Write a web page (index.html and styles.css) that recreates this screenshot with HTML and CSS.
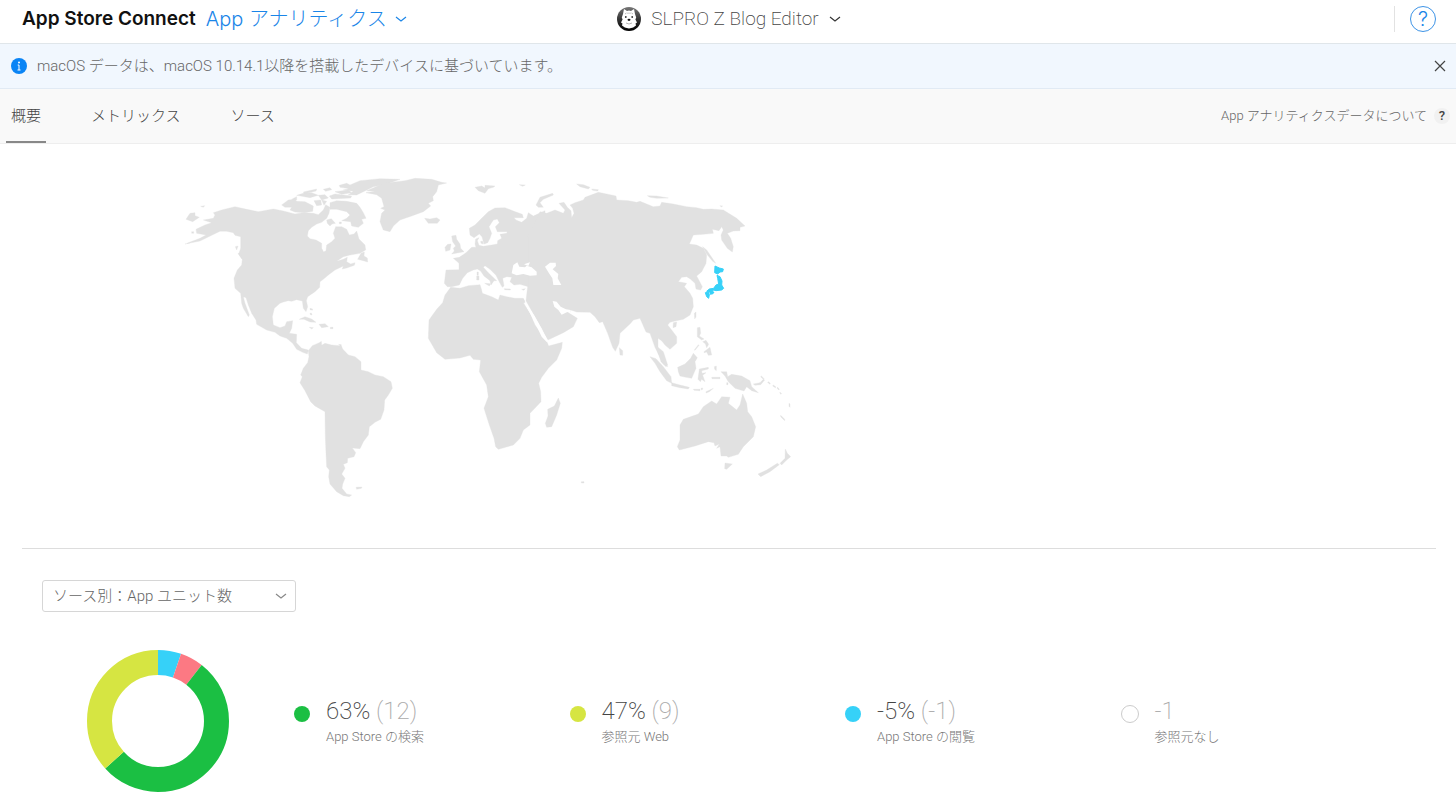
FILE: index.html
```html
<!DOCTYPE html>
<html lang="ja">
<head>
<meta charset="utf-8">
<meta name="viewport" content="width=device-width, initial-scale=1">
<title>App アナリティクス</title>
<link rel="stylesheet" href="styles.css">
</head>
<body>
<header class="topbar">
  <div class="brand">
    <a class="brand-name" href="#">App Store Connect</a>
    <button class="section-menu" type="button">App アナリティクス
      <svg class="chevron" viewBox="0 0 12 12" width="12" height="12" aria-hidden="true"><path d="M1 4l5 4 5-4"/></svg>
    </button>
  </div>
  <button class="app-menu" type="button">
    <svg class="app-icon" viewBox="0 0 24 24" width="24" height="24" aria-hidden="true">
      <defs><linearGradient id="dark" x1="0" y1="0" x2="0" y2="1"><stop offset="0" stop-color="#777"/><stop offset=".6" stop-color="#2a2a2a"/><stop offset="1" stop-color="#000"/></linearGradient></defs>
      <circle cx="12" cy="12" r="12" fill="url(#dark)"/>
      <path fill="#fff" d="M7 2l3 2q2-.8 4 0L17 2l1 5 1.200 3.500-.8 2 1.600 3-1.500 1 .5 2-2.800 2L12 21.500l-4.200-1-2.800-2 .5-2-1.500-1 1.600-3-.8-2L6 7z"/>
      <circle cx="8.800" cy="10" r=".9" fill="#333"/><circle cx="15.200" cy="10" r=".9" fill="#333"/>
      <ellipse cx="12" cy="12.800" rx="1.500" ry="1.100" fill="#111"/>
      <path d="M9 16q3 2 6 0M8 7l1.500-1M16 7l-1.500-1M11 5.500v1.500M13 5.500v1.500" fill="none" stroke="#888" stroke-width=".6"/>
    </svg>
    <span>SLPRO Z Blog Editor</span>
    <svg class="chevron" viewBox="0 0 12 12" width="12" height="12" aria-hidden="true"><path d="M1 4l5 4 5-4"/></svg>
  </button>
  <div class="top-actions">
    <button class="help" type="button" aria-label="ヘルプ">?</button>
  </div>
</header>

<div class="notice" role="status">
  <svg class="info" viewBox="0 0 16 16" width="16" height="16" aria-hidden="true"><circle cx="8" cy="8" r="8" fill="#0a84f5"/><circle cx="8" cy="4.500" r="1" fill="#fff"/><path d="M6.700 7H8v5M6.500 12h3" fill="none" stroke="#fff"/></svg>
  <p class="notice-text">macOS データは、macOS 10.14.1以降を搭載したデバイスに基づいています。</p>
  <button class="close" type="button" aria-label="閉じる"><svg viewBox="0 0 12 12" width="12" height="12" aria-hidden="true"><path d="M1 1l10 10M11 1L1 11"/></svg></button>
</div>

<nav class="tabs">
  <a class="tab tab-active" href="#">概要</a>
  <a class="tab" href="#">メトリックス</a>
  <a class="tab" href="#">ソース</a>
  <a class="about" href="#">App アナリティクスデータについて <span class="about-mark">?</span></a>
</nav>

<main class="content">
  <section class="map-panel">
    <svg class="map" viewBox="0 0 1860 1005" role="img" aria-label="世界地図">
      <g class="land">
        <!-- North America -->
        <path d="M100 128L125 120 165 110 200 118 235 125 280 117 310 123 330 128 345 132 370 128 400 130 415 134 430 120 437 104 450 112 447 130 440 145 425 157 410 162 395 172 385 182 382 198 390 206 408 210 425 220 425 235 431 246 438 242 440 225 455 215 465 205 460 190 467 170 485 170 500 178 508 195 522 192 530 183 537 207 555 225 557 240 540 250 510 255 490 260 470 274 490 268 502 262 500 275 512 282 525 278 523 286 500 294 487 297 490 288 465 300 445 315 430 328 420 335 419 352 405 365 383 380 379 392 383 410 378 425 370 415 367 393 350 389 335 394 325 392 310 396 300 400 283 415 277 440 280 465 300 473 315 468 320 455 338 452 335 475 328 490 350 493 349 518 365 535 385 540 382 552 368 547 350 538 338 520 320 505 300 498 285 487 260 480 230 463 228 450 215 430 205 405 198 383 190 380 195 400 208 435 205 440 190 415 185 400 182 370 165 355 162 325 172 300 185 285 187 268 176 252 182 235 182 200 165 196 160 188 140 184 120 184 95 196 60 213 15 222 60 205 78 195 50 190 48 178 75 165 95 158 70 150 100 145 105 135z"/>
        <path d="M18 148L30 130 45 128 45 137 58 142 38 155zM62 109L74 107 70 112zM35 185h6v5h-6zM166 230l8-2-4 12zM174 250l10 4 14 14-1 6-12-8z"/>
        <path d="M305 105L325 90 345 88 350 94 375 95 400 108 398 124 375 128 345 126 330 120 335 112 315 112zM335 88L350 80 350 90zM350 76L370 70 395 68 415 76 390 83zM370 66l40-9-2 6-35 8zM415 76l20-2 10 10-20 6zM402 92l20-2 3 15-15 2zM425 90l15 4-8 12zM430 58l20-5 5 6-18 5zM448 78L465 72 515 78 512 84 455 87zM478 46L500 40 520 50 515 60 500 55 480 52zM465 65l40-5 10 8-30 5z"/>
        <path d="M510 45L540 32 600 26 660 28 620 42 580 50 550 65 530 75 505 74 520 64 490 60 520 54z"/>
        <path d="M450 98L470 92 500 94 530 100 540 112 550 128 558 145 545 148 550 160 535 172 515 168 512 155 485 152 500 145 510 135 500 125 470 118 450 118zM440 150l14-4 12 14-10 2-6 6-8-8zM478 156h6v5h-6z"/>
        <path d="M533 268L543 250 553 246 552 258 562 264 563 276 550 272zM358 448L375 440 395 447 408 457 390 456 372 448zM417 463l18-2 10 9-20 3zM388 472l12 1-5 4zM451 472h8v4h-8zM390 415l8 2-1 4-7-2zM390 430l4-1 2 6-5-1z"/>
      </g>
      <g class="land" transform="translate(300 480)">
        <!-- South America -->
        <path d="M85 62L97 47 118 38 124 34 125 46 135 40 155 45 178 47 183 45 188 57 205 75 225 80 243 95 243 120 265 125 285 135 310 140 333 155 337 175 325 195 314 210 312 240 302 268 285 277 268 290 265 315 250 335 240 356 217 354 227 368 222 380 203 385 202 398 190 403 195 415 185 432 195 445 188 462 186 475 200 492 215 495 208 500 190 497 170 485 150 462 146 440 148 420 140 410 138 370 136 320 135 245 105 228 92 215 75 182 60 158 67 140 62 135 70 115 83 98 87 80z"/>
        <path d="M228 472l18-1-2 4-14 3zM176 43l8 1-2 5z"/>
      </g>
      <g class="land" transform="translate(540 0)">
        <!-- Greenland and Iceland -->
        <path d="M18 68L45 64 20 62 60 45 85 38 135 32 165 25 215 28 245 37 260 39 235 45 230 65 218 80 220 92 205 100 212 108 190 125 155 138 120 150 100 168 90 185 70 180 60 155 65 130 75 120 62 115 72 110 65 85 50 74z"/>
        <path d="M194 145L210 147 230 143 240 150 232 160 205 160z"/>
        <path d="M345 52L365 48 375 54 375 46 405 48 400 52 385 56 375 70 355 62zM478 44l18 1-8 4zM528 105L540 82 578 70 580 75 550 88 540 98 550 112 535 112z"/>
        <!-- Europe -->
        <path d="M555 122L520 138 505 128 500 145 485 157 468 150 462 143 490 143 487 133 460 123 435 113 405 114 385 125 365 145 345 165 328 175 330 195 342 203 358 192 366 200 372 222 383 218 390 205 395 190 387 170 400 150 412 147 418 158 406 170 412 185 442 185 440 190 420 193 425 205 413 212 412 222 395 225 370 229 357 226 352 212 357 203 347 207 345 222 348 232 335 232 318 248 298 262 280 265 297 280 297 299 258 300 253 340 262 350 275 350 298 345 308 325 322 308 340 300 352 297 362 303 372 318 390 332 393 345 402 332 410 332 385 308 370 292 375 287 390 298 408 316 420 340 427 352 432 348 428 325 440 320 455 322 450 335 462 345 480 343 505 350 560 355z"/>
        <path d="M275 198L288 196 290 208 300 222 302 235 312 245 275 252 283 243 280 235 287 228 278 215zM255 232L263 223 273 222 270 240 257 244zM374 340l18 1-4 7zM350 318h7v12h-7zM351 306h4v10h-4zM362 214l6 0 2 8-7-2zM433 356l18 1v3l-17-1zM485 358l11-2-5 5z"/>
      </g>
      <g class="land" transform="translate(1080 0)">
        <!-- Asia -->
        <path d="M0 125L20 130 45 120 70 130 75 120 57 100 72 97 82 112 93 122 95 143 102 130 98 115 90 105 105 98 130 90 135 82 175 67 200 72 228 78 230 90 265 92 290 97 300 94 340 110 360 108 365 97 400 102 440 110 470 113 490 118 515 117 550 120 590 145 615 168 600 172 600 182 580 183 562 190 572 205 580 230 577 246 562 235 545 210 543 195 550 180 545 170 537 182 517 178 520 190 490 193 460 195 448 222 470 225 490 235 500 255 498 280 485 305 470 318 487 350 482 360 468 357 465 340 452 328 440 320 425 322 415 335 440 340 433 350 450 370 458 385 460 410 450 435 430 448 405 453 390 457 383 465 395 480 410 500 410 520 390 538 375 525 365 512 354 505 354 545 365 555 383 590 370 582 345 532 330 490 318 486 300 445 280 450 272 460 240 490 237 520 226 544 218 532 203 490 188 455 178 458 165 440 150 427 110 426 92 420 88 430 112 445 100 470 70 488 22 511 5 475 -15 440 -42 392 -37 350 -37 200z"/>
        <path d="M110 42L130 44 150 52 145 57 120 50zM155 57l20 2-2 4-15-2zM322 77L350 78 385 84 350 85 330 82zM540 107l8 1-4 3zM488 230L500 240 515 262 527 280 518 274 500 252zM400 458l10-2-2 14-9 3zM463 430l5-4 0 15-4 6z"/>
        <g class="japan">
          <path d="M525 288L538 294 550 297 548 305 540 306 533 312 524 308zM531 316L540 320 546 333 545 345 551 355 545 360 528 362 520 360 515 368 500 364 508 357 521 355 528 345 536 342 533 325zM496 368L506 366 508 375 506 385 500 380zM512 366l10 0-3 5-8 2z"/>
        </g>
      </g>
      <g class="land" transform="translate(720 330)">
        <!-- Africa -->
        <path d="M92 22L120 25 145 17 180 14 185 30 187 40 215 50 235 60 240 45 260 50 285 55 310 55 318 70 310 68 330 100 345 135 362 158 380 184 386 198 427 187 425 205 410 240 385 265 365 292 356 310 362 335 363 365 330 400 330 435 310 450 300 475 280 495 235 508 227 500 222 475 208 435 192 385 205 350 200 315 178 275 182 240 160 238 150 226 120 234 75 238 50 218 25 175 27 120 50 88 68 68 75 45z"/>
        <path d="M415 354L421 370 410 405 395 440 380 442 376 430 384 408 383 388 403 378z"/>
      </g>
      <g class="land" transform="translate(1260 360)">
        <!-- Islands and Oceania -->
        <path d="M58 173L68 182 68 196 60 195zM150 200L168 206 190 230 213 260 215 280 200 272 180 245 165 220zM215 278L240 285 268 292 265 297 240 293 215 287zM172 170L190 185 203 225 198 230 183 215 175 190zM233 232L255 222 272 205 280 190 292 203 285 215 288 235 275 265 258 262 240 258 235 245zM298 237L325 232 325 237 305 242 306 250 318 248 308 256 315 275 305 268 301 275 294 268zM280 298l20 0 0 4-18-1zM318 305l22-10-12 10-10 4zM335 262l25 0 0 4-24 0zM343 230l6-2 0 14-5-4zM292 113L300 112 302 130 298 138 312 147 305 150 292 140zM283 180l12-16 2 2-12 15zM308 155l10-4 8 12-6 10-4-12zM312 185L330 172 335 195 325 196 320 186 312 188zM303 295l5-1 0 4-4 2z"/>
        <path d="M363 245L380 245 383 260 395 253 425 258 450 272 455 290 475 308 455 302 440 290 432 303 405 295 385 275 375 258zM380 278h4v6h-4zM460 282L480 278 490 268 494 270 482 284 465 286zM484 258l8 8-2 2-8-8zM505 275l6 5-2 3-6-6zM520 285l8 6-2 2-8-5zM533 292l5 6-2 2-5-6zM540 307l5 4-2 2-4-4zM567 340l3 2 0 10-3-3zM542 376l12 12 0 4-12-12z"/>
        <path d="M428 312L440 340 443 365 455 380 467 410 460 440 430 470 415 493 385 502 380 498 363 498 360 470 350 475 358 462 345 468 342 458 325 455 285 468 238 480 232 470 240 450 240 405 250 388 295 372 310 350 335 333 350 342 365 320 390 322 385 340 410 360 420 345zM375 519L397 522 380 538 374 536zM474 552L500 540 532 520 538 524 510 545 482 560zM556 477L562 490 572 500 560 510 545 525 540 520 555 505z"/>
      </g>
      <g class="land"><path d="M1204 935l8 0 0 4-8 0z"/></g>
      <!-- Inland seas -->
      <g class="sea" transform="translate(1080 0)">
        <path d="M-85 310L-80 285 -68 277 -62 290 -45 292 -40 287 -25 292 -10 305 -10 316 -30 317 -50 312 -70 316zM-48 283L-30 277 -35 288zM15 290L30 278 47 278 48 288 38 298 55 312 53 325 64 345 40 345 37 325 27 310zM38 393L50 395 62 410 78 418 92 420 90 430 82 426 65 434 55 420 43 410z"/>
        <path d="M-45 392L-40 402 -15 440 15 495 25 512 20 516 5 500 -15 458 -46 400z"/>
      </g>
    </svg>
  </section>

  <section class="sources">
    <div class="select-box">
      <select class="select" aria-label="表示する指標"><option>ソース別：App ユニット数</option></select>
      <svg class="chevron select-arrow" viewBox="0 0 12 12" width="12" height="12" aria-hidden="true"><path d="M1 4l5 4 5-4"/></svg>
    </div>
    <div class="chart-row">
      <svg class="donut" viewBox="0 0 142 142" role="img" aria-label="ソース別の割合">
        <g fill="none" stroke-width="25" transform="rotate(-90 71 71)">
          <circle cx="71" cy="71" r="58.500" stroke="#36d1f8" pathLength="360" stroke-dasharray="19 341"/>
          <circle cx="71" cy="71" r="58.500" stroke="#fc7983" pathLength="360" stroke-dasharray="19 341" stroke-dashoffset="-19"/>
          <circle cx="71" cy="71" r="58.500" stroke="#1bbf43" pathLength="360" stroke-dasharray="190 170" stroke-dashoffset="-38"/>
          <circle cx="71" cy="71" r="58.500" stroke="#d6e542" pathLength="360" stroke-dasharray="132 228" stroke-dashoffset="-228"/>
        </g>
      </svg>
      <ul class="legend">
        <li class="legend-item"><span class="dot dot-green"></span><div><div class="value">63% <span class="count">(12)</span></div><div class="label">App Store の検索</div></div></li>
        <li class="legend-item"><span class="dot dot-lime"></span><div><div class="value">47% <span class="count">(9)</span></div><div class="label">参照元 Web</div></div></li>
        <li class="legend-item"><span class="dot dot-blue"></span><div><div class="value">-5% <span class="count">(-1)</span></div><div class="label">App Store の閲覧</div></div></li>
        <li class="legend-item"><span class="dot dot-empty"></span><div><div class="value"><span class="count">-1</span></div><div class="label">参照元なし</div></div></li>
      </ul>
    </div>
  </section>
</main>
</body>
</html>
```
FILE: styles.css
```css
* { box-sizing: border-box; }

body {
  margin: 0;
  background: #fff;
  color: #666;
  font: 300 15px/20px Roboto, "Noto Sans CJK JP", sans-serif;
}

button {
  padding: 0;
  border: 0;
  background: none;
  color: inherit;
  font: inherit;
  cursor: pointer;
}

a { color: inherit; text-decoration: none; }

.chevron { fill: none; stroke: currentColor; stroke-width: 1.2; }

.topbar {
  display: grid;
  grid-template-columns: 1fr auto 1fr;
  align-items: center;
  height: 44px;
  padding: 0 20px 5px 22px;
  border-bottom: 1px solid #e0e6ea;
}
.brand { display: flex; align-items: center; gap: 10px; white-space: nowrap; }
.brand-name { color: #111; font-family: Inter, sans-serif; font-size: 19px; font-weight: 600; }
.section-menu { display: flex; align-items: center; gap: 8px; color: #1a85e8; font-family: Inter, "Noto Sans CJK JP", sans-serif; font-size: 20px; }
.app-menu { display: flex; align-items: center; gap: 10px; color: #444; font-size: 19px; font-weight: 200; white-space: nowrap; }
.app-menu .chevron { color: #333; }
.top-actions { display: flex; justify-content: flex-end; }
.top-actions::before { content: ""; width: 1px; height: 26px; margin-right: 15px; background: #e2e2e2; }
.help {
  width: 26px;
  height: 26px;
  border: 1px solid #3d93e6;
  border-radius: 50%;
  color: #1a85e8;
  font-family: Inter, sans-serif;
  font-size: 20px;
}

.notice {
  display: flex;
  align-items: center;
  gap: 10px;
  height: 45px;
  padding: 0 10px 0 11px;
  border-bottom: 1px solid #e1eaf4;
  background: #f1f7fe;
}
.notice-text { flex: 1; margin: 0; }
.close { display: flex; }
.close svg { fill: none; stroke: #444; stroke-width: 1.2; }

.tabs {
  display: flex;
  gap: 40px;
  height: 55px;
  padding: 0 6px;
  border-bottom: 1px solid #eee;
  background: #f9f9f9;
}
.tab { padding: 17px 5px; border-bottom: 2px solid transparent; color: #444; }
.tab-active { border-color: #888; }
.about { display: flex; align-items: center; gap: 7px; margin-left: auto; font-size: 13px; }
.about-mark {
  width: 16px;
  border-radius: 50%;
  background: #f1f1f1;
  color: #444;
  line-height: 16px;
  font-weight: 500;
  text-align: center;
}

.content { padding: 0 20px 0 22px; }
.map-panel { padding: 26px 158px 43px; border-bottom: 1px solid #ddd; }
.map { display: block; width: 620px; max-width: 100%; }
.land { fill: #e1e1e1; stroke: #e1e1e1; stroke-width: 1; stroke-linejoin: round; }
.japan { fill: #36d1f8; stroke: #36d1f8; stroke-width: 3; }
.sea { fill: #fff; }

.sources { padding: 31px 20px 16px; }
.select-box { display: grid; align-items: center; width: 254px; }
.select, .select-arrow { grid-area: 1 / 1; }
.select {
  appearance: none;
  height: 32px;
  padding: 0 32px 0 10px;
  border: 1px solid #d6d6d6;
  border-radius: 3px;
  background: #fff;
  color: inherit;
  font: inherit;
}
.select-arrow { justify-self: end; margin-right: 9px; pointer-events: none; color: #888; }

.chart-row { display: flex; gap: 65px; padding: 38px 20px 0 45px; }
.donut { flex: none; width: 142px; height: 142px; }
.legend {
  display: grid;
  flex: 1;
  grid-template-columns: repeat(4, 1fr);
  align-content: start;
  margin: 0;
  padding: 46px 0 0;
  list-style: none;
}
.legend-item { display: flex; gap: 16px; }
.dot { flex: none; width: 16px; height: 16px; margin-top: 10px; border-radius: 50%; }
.dot-green { background: #1bbf43; }
.dot-lime { background: #d6e542; }
.dot-blue { background: #36d1f8; }
.dot-empty { width: 18px; height: 18px; margin-top: 9px; border: 1px solid #ccc; }
.value { color: #444; font-size: 24px; font-weight: 200; line-height: 30px; }
.count { color: #aaa; }
.label { font-size: 13px; line-height: 22px; color: #777; }
```
